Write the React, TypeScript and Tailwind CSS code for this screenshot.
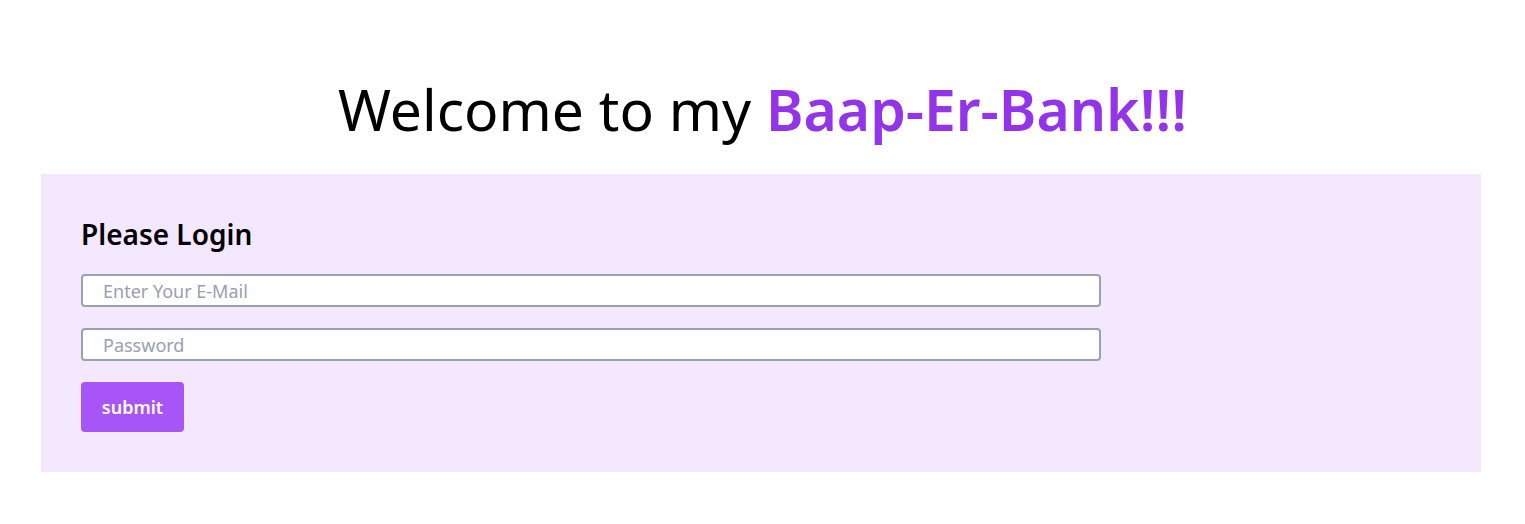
export default function App() {
  return (
    <div className="min-h-screen bg-white text-black" style={{ fontFamily: '"Noto Sans", "Open Sans", sans-serif' }}>
      <h1 className="pt-[65px] pb-[21px] text-center text-[57px] leading-[88px]">
        Welcome to my <span className="font-semibold text-[#9333ea]">Baap-Er-Bank!!!</span>
      </h1>

      <div className="ml-[41px] w-[1440px] bg-[#f3e8ff] p-10">
        <h2 className="mt-[2px] mb-[22px] text-[28px] leading-9 font-semibold">Please Login</h2>
        <form className="flex flex-col gap-[21px]" onSubmit={(e) => e.preventDefault()}>
          <input
            type="email"
            placeholder="Enter Your E-Mail"
            className="h-[33px] w-3/4 rounded border-2 border-gray-400 bg-white px-5 text-lg leading-7 placeholder:text-gray-400 outline-none"
          />
          <input
            type="password"
            placeholder="Password"
            className="h-[33px] w-3/4 rounded border-2 border-gray-400 bg-white px-5 text-lg leading-7 placeholder:text-gray-400 outline-none"
          />
          <div>
            <button
              type="submit"
              className="h-[50px] w-[103px] rounded bg-[#a855f7] text-lg font-semibold text-white"
            >
              submit
            </button>
          </div>
        </form>
      </div>
    </div>
  );
}
